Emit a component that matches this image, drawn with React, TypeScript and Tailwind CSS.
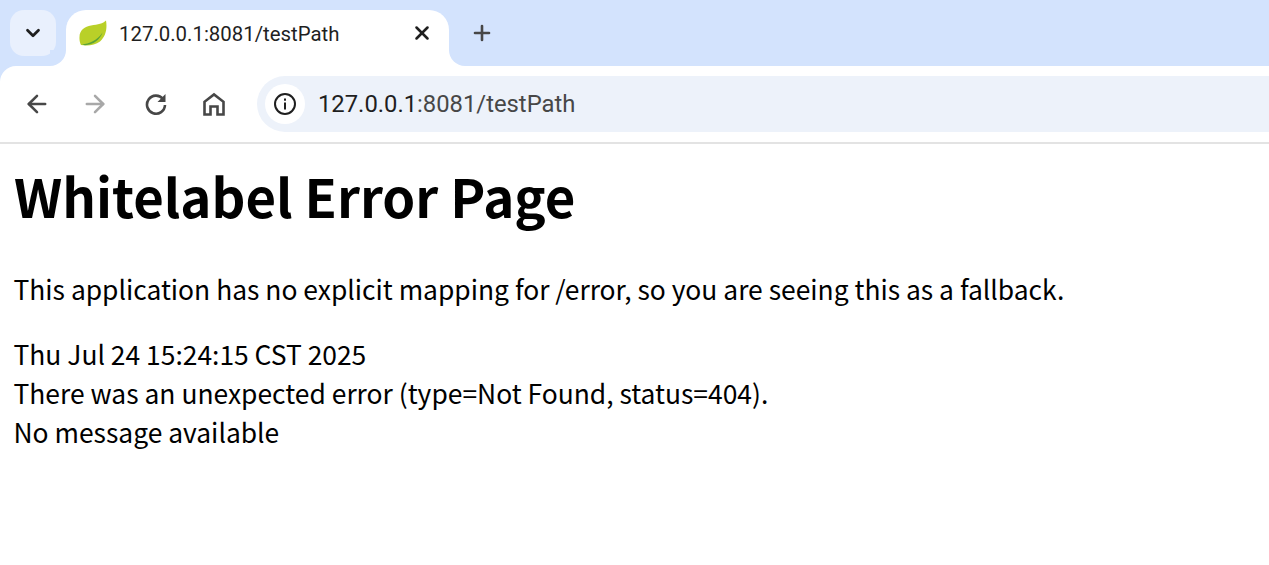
import { ChevronDown, X, Plus, ArrowLeft, ArrowRight } from "lucide-react";

function SpringLeaf() {
  return (
    <svg width="28" height="26" viewBox="0 0 28 26">
      <path d="M0.500 17C0.500 10 6 6.500 12 5.500C19 4.500 24 3.500 27 0.500C28.500 9 26.500 17 21 21.500C16 25.500 8 26 2 25C0.800 22.500 0.300 20 0.500 17Z" fill="#b9d028" />
      <path d="M3 24.500C10 23.500 18 21 23.500 12.500C21 20 14 24.500 6 25.300Z" fill="#5aa338" />
    </svg>
  );
}

function ReloadIcon() {
  return (
    <svg width="24" height="24" viewBox="0 0 24 24" fill="none" stroke="#474747" strokeWidth="2.600">
      <path d="M19 7A9 9 0 1 0 21 13" />
      <path d="M21.500 2V10H13.500Z" stroke="none" fill="#474747" />
    </svg>
  );
}

function HomeIcon() {
  return (
    <svg width="24" height="24" viewBox="0 0 24 24" fill="none" stroke="#474747" strokeWidth="2.600">
      <path d="M2.500 22.500V9.800L12 2.500L21.500 9.800V22.500H15.500V14.500H8.500V22.500Z" />
    </svg>
  );
}

function InfoIcon() {
  return (
    <svg width="24" height="24" viewBox="0 0 24 24" fill="none">
      <circle cx="12" cy="12" r="10" stroke="#1f1f1f" strokeWidth="2" />
      <rect x="11" y="10.500" width="2" height="7" fill="#1f1f1f" />
      <rect x="11" y="6.500" width="2" height="2.200" fill="#1f1f1f" />
    </svg>
  );
}

export default function App() {
  return (
    <div className="h-[565px] w-[1269px] overflow-hidden bg-white font-['Noto_Sans_CJK_SC','Noto_Sans',sans-serif] text-black">
      {/* Tab strip */}
      <div className="flex h-[66px] items-end bg-[#d3e3fd] pl-[10px]">
        <div className="mb-[10px] flex h-[46px] w-[46px] items-center justify-center rounded-[14px] bg-[#e9f0fd]">
          <ChevronDown size={22} strokeWidth={3} color="#1f1f1f" />
        </div>
        <div className="relative ml-[10px] flex h-[56px] w-[383px] items-center rounded-t-[20px] bg-white pb-[10px] pl-[13px] pr-[16px]">
          <div className="absolute bottom-0 left-[-16px] h-[16px] w-[16px] bg-white">
            <div className="h-full w-full rounded-br-[16px] bg-[#d3e3fd]" />
          </div>
          <div className="absolute bottom-0 right-[-16px] h-[16px] w-[16px] bg-white">
            <div className="h-full w-full rounded-bl-[16px] bg-[#d3e3fd]" />
          </div>
          <SpringLeaf />
          <span className="ml-[12px] flex-1 whitespace-nowrap pt-[2px] font-['Roboto',sans-serif] text-[20.400px] text-[#1f1f1f]">
            127.0.0.1:8081/testPath
          </span>
          <X size={22} strokeWidth={2.800} color="#1f1f1f" />
        </div>
        <div className="mb-[21px] ml-[21px]">
          <Plus size={24} strokeWidth={2.600} color="#474747" />
        </div>
      </div>

      {/* Toolbar */}
      <div className="bg-[#d3e3fd]">
        <div className="flex h-[78px] items-center rounded-tl-[16px] border-b-2 border-[#e3e3e3] bg-white pl-[23px]">
          <ArrowLeft size={28} strokeWidth={2.200} color="#474747" />
          <div className="ml-[30px]">
            <ArrowRight size={28} strokeWidth={2.200} color="#a8a8a8" />
          </div>
          <div className="ml-[35px]">
            <ReloadIcon />
          </div>
          <div className="ml-[34px]">
            <HomeIcon />
          </div>
          <div className="ml-[31px] flex h-[56px] flex-1 items-center rounded-l-[28px] bg-[#edf2fa] pl-[8px]">
            <div className="flex h-[40px] w-[40px] items-center justify-center rounded-full bg-white">
              <InfoIcon />
            </div>
            <span className="ml-[13px] whitespace-nowrap pt-[1px] font-['Roboto',sans-serif] text-[23.800px] text-[#474747]">
              <span className="text-[#1f1f1f]">127.0.0.1</span>:8081/testPath
            </span>
          </div>
        </div>
      </div>

      {/* Page */}
      <div className="px-[14px]">
        <h1 className="mt-[13px] text-[52.700px] leading-[76px] font-bold">Whitelabel Error Page</h1>
        <p className="mt-[36px] ml-[-0.500px] text-[26.420px] leading-[39px]">
          This application has no explicit mapping for /error, so you are seeing this as a fallback.
        </p>
        <div className="mt-[26px] ml-[-0.500px] text-[26.420px] leading-[39px]">
          <div>Thu Jul 24 15:24:15 CST 2025</div>
          <div>There was an unexpected error (type=Not Found, status=404).</div>
          <div>No message available</div>
        </div>
      </div>
    </div>
  );
}
